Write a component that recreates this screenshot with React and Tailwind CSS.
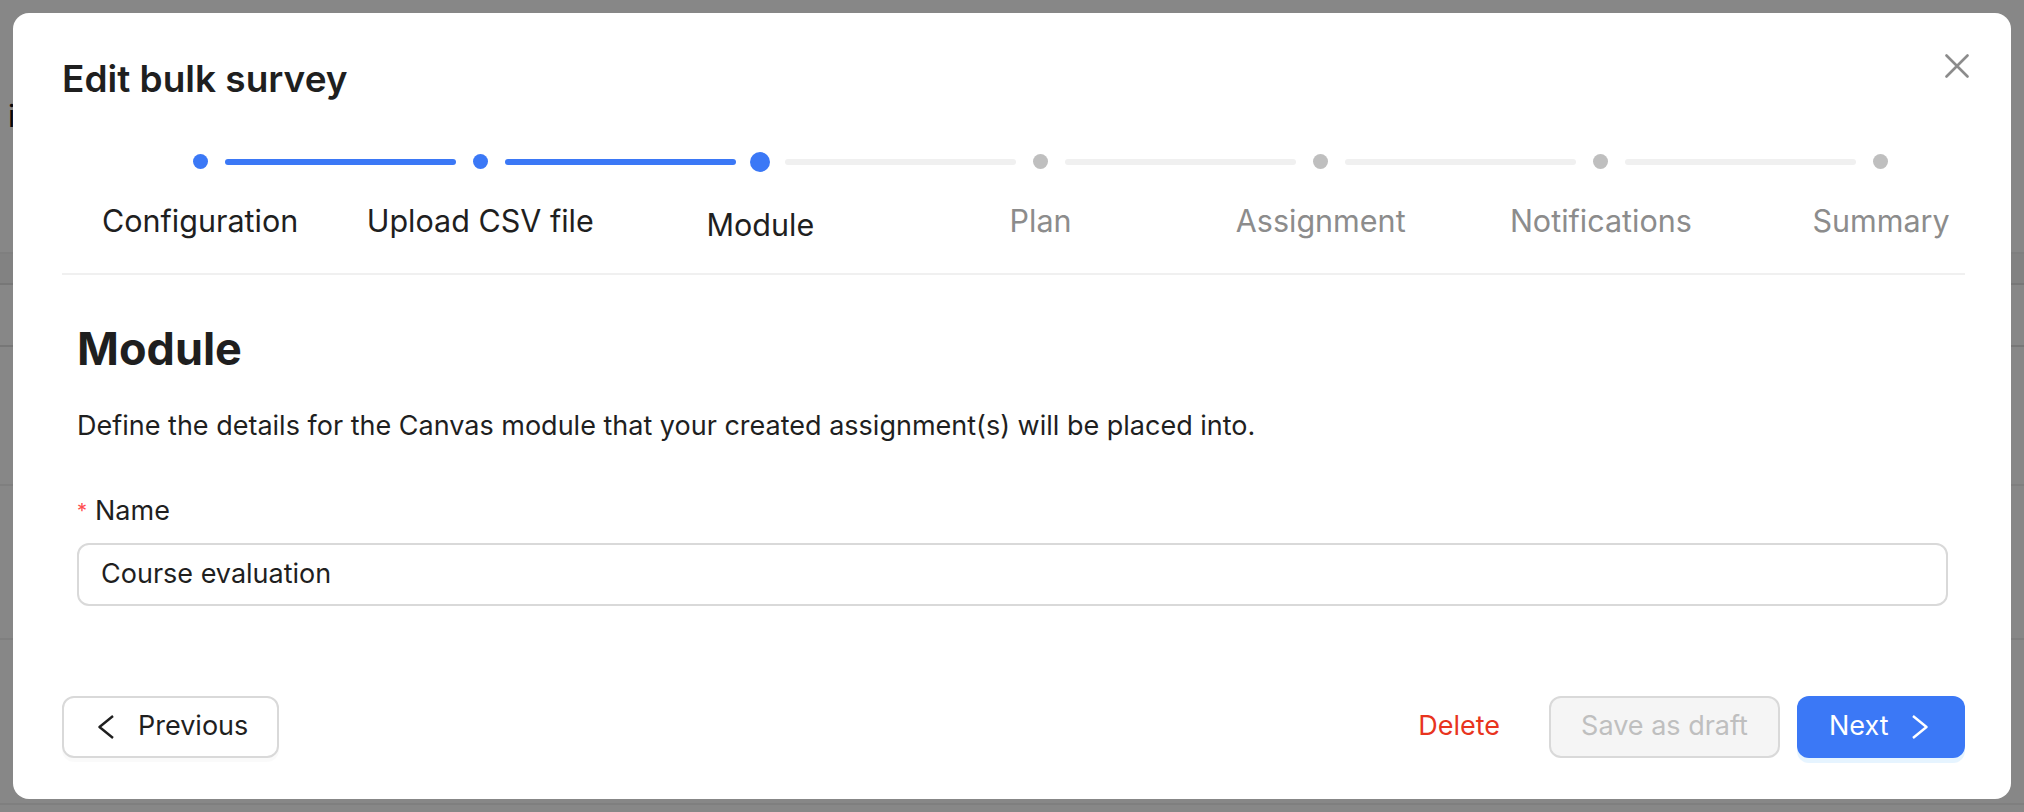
import React from "react";

const steps = [
  { label: "Configuration", state: "done" },
  { label: "Upload CSV file", state: "done" },
  { label: "Module", state: "current" },
  { label: "Plan", state: "todo" },
  { label: "Assignment", state: "todo" },
  { label: "Notifications", state: "todo" },
  { label: "Summary", state: "todo" },
];

function Dot({ state }) {
  if (state === "current")
    return <div className="h-[20px] w-[20px] rounded-full bg-[#3b78f6]" />;
  if (state === "done")
    return <div className="h-[15px] w-[15px] rounded-full bg-[#3b78f6]" />;
  return <div className="h-[15px] w-[15px] rounded-full bg-[#bfbfbf]" />;
}

function Stepper() {
  return (
    <div className="flex flex-col">
      <div className="ml-[113.5px] flex h-[20px] items-center">
        {steps.map((s, i) => (
          <React.Fragment key={s.label}>
            <div className="flex w-[49px] shrink-0 items-center justify-center">
              <Dot state={s.state} />
            </div>
            {i < steps.length - 1 && (
              <div
                className={
                  i < 2
                    ? "h-[6px] w-[231.17px] shrink-0 rounded-full bg-[#3b78f6]"
                    : "h-[6px] w-[231.17px] shrink-0 rounded-full bg-[#f0f0f0]"
                }
              />
            )}
          </React.Fragment>
        ))}
      </div>
      <div className="ml-[-2px] mt-[29px] flex">
        {steps.map((s) => (
          <div
            key={s.label}
            className={
              s.state === "current"
                ? "mt-[4px] w-[280.17px] shrink-0 text-center text-[30.5px] leading-[40px] text-[#1f1f1f]"
                : s.state === "done"
                ? "w-[280.17px] shrink-0 text-center text-[30.5px] leading-[40px] text-[#1f1f1f]"
                : "w-[280.17px] shrink-0 text-center text-[30.5px] leading-[40px] text-[#8c8c8c]"
            }
          >
            {s.label}
          </div>
        ))}
      </div>
    </div>
  );
}

export default function App() {
  return (
    <div
      className="relative h-[812px] w-full overflow-hidden bg-white"
      style={{ fontFamily: "Inter, 'Noto Sans', sans-serif" }}
    >
      {/* background page */}
      <div className="flex flex-col">
        <div className="h-[92px]" />
        <div className="pl-[8px] text-[30px] leading-[48px] text-[#111]">it</div>
        <div className="h-[114px] border-b-2 border-[#f0f0f0]" />
        <div className="h-[31px] border-b-2 border-[#e0e0e0] bg-[#f5f5f5]" />
        <div className="h-[62px] border-b-2 border-[#e0e0e0]" />
        <div className="h-[139px] border-b-2 border-[#f0f0f0]" />
        <div className="h-[154px] border-b-2 border-[#f0f0f0]" />
        <div className="h-[165px] border-b-2 border-[#f0f0f0]" />
      </div>

      {/* overlay + modal */}
      <div className="fixed inset-0 bg-[rgba(0,0,0,0.47)] p-[13px]">
        <div className="relative flex h-[786px] flex-col rounded-[16px] bg-white pl-[49px] pr-[46px] pt-[42px]">
          <button className="absolute right-[42px] top-[41px] flex h-[24px] w-[24px] items-center justify-center">
            <svg width="24" height="24" viewBox="0 0 24 24" fill="none">
              <path
                d="M1.5 1.5L22.5 22.5M22.5 1.5L1.5 22.5"
                stroke="#8c8c8c"
                strokeWidth="2.6"
                strokeLinecap="round"
              />
            </svg>
          </button>

          <h1 className="text-[37px] font-semibold leading-[48px] text-[#1f1f1f]">
            Edit bulk survey
          </h1>

          <div className="mt-[48.5px]">
            <Stepper />
          </div>

          <div className="mt-[28px] h-[2px] bg-[#f0f0f0]" />

          <div className="flex flex-col pl-[15px] pr-[17px]">
            <h2 className="mt-[46px] text-[45px] font-bold leading-[56px] text-[#1f1f1f]">
              Module
            </h2>
            <p className="mt-[31px] text-[27px] leading-[36px] text-[#1f1f1f]">
              Define the details for the Canvas module that your created assignment(s) will be placed into.
            </p>
            <div className="mt-[49px] flex items-center text-[27px] leading-[36px] text-[#1f1f1f]">
              <span className="mr-[8px] text-[20px] text-[#ff4d4f]">*</span>
              <span>Name</span>
            </div>
            <div className="mt-[14px] flex h-[63px] items-center rounded-[12px] border-2 border-[#d9d9d9] px-[22px] text-[27px] text-[#1f1f1f]">
              Course evaluation
            </div>
          </div>

          <div className="mt-[90px] flex items-center">
            <button className="flex h-[62px] w-[217px] items-center rounded-[12px] border-2 border-[#d9d9d9] bg-white pl-[34px] text-[27px] text-[#1f1f1f] shadow-[0_4px_0_rgba(0,0,0,0.02)]">
              <svg width="16" height="24" viewBox="0 0 16 24" fill="none">
                <path d="M15 1L1.5 12L15 23" stroke="#1f1f1f" strokeWidth="2.4" strokeLinejoin="round" />
              </svg>
              <span className="ml-[24px]">Previous</span>
            </button>
            <div className="flex-1" />
            <button className="mr-[49px] text-[27px] text-[#e8341e]">Delete</button>
            <button className="h-[62px] w-[231px] rounded-[12px] border-2 border-[#d9d9d9] bg-[#f5f5f5] text-[27px] text-[#bfbfbf]">
              Save as draft
            </button>
            <button className="ml-[17px] flex h-[62px] w-[168px] items-center rounded-[12px] bg-[#3b78f6] pl-[32px] text-[27px] text-white shadow-[0_5px_0_rgba(5,145,255,0.1)]">
              <span>Next</span>
              <svg className="ml-[23px]" width="16" height="24" viewBox="0 0 16 24" fill="none">
                <path d="M1 1L14.5 12L1 23" stroke="white" strokeWidth="2.4" strokeLinejoin="round" />
              </svg>
            </button>
          </div>
        </div>
      </div>
    </div>
  );
}
